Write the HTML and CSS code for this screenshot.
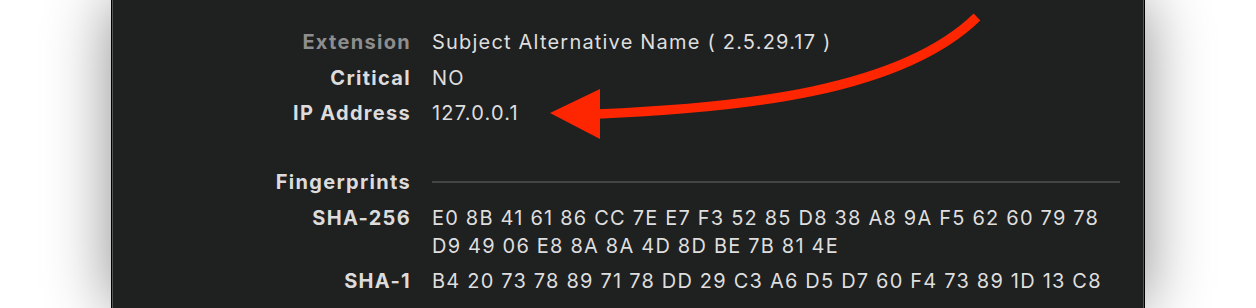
FILE: index.html
```html
<!DOCTYPE html>
<html lang="en">
<head>
    <meta charset="UTF-8">
    <meta name="viewport" content="width=device-width, initial-scale=1.0">
    <title>Certificate Details</title>
    <link rel="stylesheet" href="styles.css">
</head>
<body>

<div class="panel">
    <!-- Extension -->
    <div class="section">
        <div class="label dim">Extension</div>
        <div class="value">Subject Alternative Name ( 2.5.29.17 )</div>
        <div class="label">Critical</div>
        <div class="value">NO</div>
        <div class="label">IP Address</div>
        <div class="value">127.0.0.1</div>
    </div>

    <!-- Fingerprints -->
    <div class="section fingerprints">
        <div class="label">Fingerprints</div>
        <div class="value"><div class="rule"></div></div>
        <div class="label">SHA-256</div>
        <div class="value">E0 8B 41 61 86 CC 7E E7 F3 52 85 D8 38 A8 9A F5 62 60 79 78<br>D9 49 06 E8 8A 8A 4D 8D BE 7B 81 4E</div>
        <div class="label">SHA-1</div>
        <div class="value">B4 20 73 78 89 71 78 DD 29 C3 A6 D5 D7 60 F4 73 89 1D 13 C8</div>
    </div>
</div>

<!-- annotation arrow drawn over the panel -->
<svg class="arrow" width="1256" height="308" viewBox="0 0 1256 308">
    <path d="M598 114 C 740 108, 900 92, 977 17" fill="none" stroke="#fe2600" stroke-width="9.5"/>
    <polygon points="550,113 600,89 600,139" fill="#fe2600"/>
</svg>

</body>
</html>
```

FILE: styles.css
```css
html, body {
    height: 100%;
}
body {
    margin: 0;
    overflow: hidden;
    background-color: #ffffff;
    font-family: Inter, "Noto Sans", sans-serif;
    font-size: 20px;
    line-height: 28px;
}
.panel {
    box-sizing: border-box;
    width: 1034px;
    min-height: 100%;
    margin: 0 auto;
    padding-top: 28px;
    border: 1px solid #000000;
    border-width: 0 1px;
    background-color: #1f2020;
    box-shadow: inset 1px 0 0 #565656, inset -1px 0 0 #565656, 0 0 60px rgba(0, 0, 0, 0.45);
}
.section {
    display: grid;
    grid-template-columns: 299px 688px;
    column-gap: 21px;
    row-gap: 7.5px;
}
.fingerprints {
    margin-top: 41px;
}
.label {
    text-align: right;
    font-weight: 700;
    letter-spacing: 1.3px;
    color: #dcdcdc;
}
.label.dim {
    color: #8e8e8e;
}
.value {
    letter-spacing: 1.2px;
    color: #dedede;
}
.rule {
    height: 2px;
    margin-top: 13px;
    background-color: #434444;
}
.arrow {
    position: absolute;
    top: 0;
    left: 0;
    pointer-events: none;
}
```
